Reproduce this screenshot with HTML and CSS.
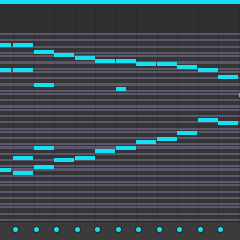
FILE: index.html
```html
<!DOCTYPE html>
<html lang="en">
<head>
    <meta charset="UTF-8">
    <meta name="viewport" content="width=device-width, initial-scale=1.0">
    <title>Piano Roll</title>
    <link rel="stylesheet" href="styles.css">
</head>
<body>
    <div class="roll">
        <div class="loop-bar"></div>
        <div class="ruler"></div>
        <div class="grid">
            <div class="note" style="left:0px;top:10px;width:11px"></div>
            <div class="note" style="left:13px;top:10px;width:20px"></div>
            <div class="note" style="left:0px;top:35px;width:11px"></div>
            <div class="note" style="left:13px;top:35px;width:20px"></div>
            <div class="note" style="left:33.5px;top:17px;width:20px"></div>
            <div class="note" style="left:54px;top:20px;width:20px"></div>
            <div class="note" style="left:74.5px;top:23px;width:20px"></div>
            <div class="note" style="left:95px;top:26px;width:20px"></div>
            <div class="note" style="left:115.5px;top:26px;width:20px"></div>
            <div class="note" style="left:136px;top:29px;width:20px"></div>
            <div class="note" style="left:156.5px;top:29px;width:20px"></div>
            <div class="note" style="left:177px;top:32px;width:20px"></div>
            <div class="note" style="left:197.5px;top:35px;width:20px"></div>
            <div class="note" style="left:218px;top:42px;width:20px"></div>
            <div class="note" style="left:33.5px;top:50px;width:20px"></div>
            <div class="note" style="left:115.5px;top:54px;width:10px"></div>
            <div class="note" style="left:238.5px;top:60px;width:1.5px"></div>
            <div class="note" style="left:197.5px;top:85px;width:20px"></div>
            <div class="note" style="left:218px;top:88px;width:20px"></div>
            <div class="note" style="left:177px;top:98px;width:20px"></div>
            <div class="note" style="left:156.5px;top:104px;width:20px"></div>
            <div class="note" style="left:136px;top:107px;width:20px"></div>
            <div class="note" style="left:115.5px;top:113px;width:20px"></div>
            <div class="note" style="left:95px;top:116px;width:20px"></div>
            <div class="note" style="left:33.5px;top:113px;width:20px"></div>
            <div class="note" style="left:13px;top:123px;width:20px"></div>
            <div class="note" style="left:74.5px;top:123px;width:20px"></div>
            <div class="note" style="left:54px;top:125px;width:20px"></div>
            <div class="note" style="left:33.5px;top:132px;width:20px"></div>
            <div class="note" style="left:0px;top:135px;width:11px"></div>
            <div class="note" style="left:13px;top:138px;width:20px"></div>
        </div>
        <div class="velocity">
            <span class="step"><i class="dot"></i></span>
            <span class="step"><i class="dot"></i></span>
            <span class="step"><i class="dot"></i></span>
            <span class="step"><i class="dot"></i></span>
            <span class="step"><i class="dot"></i></span>
            <span class="step"><i class="dot"></i></span>
            <span class="step"><i class="dot"></i></span>
            <span class="step"><i class="dot"></i></span>
            <span class="step"><i class="dot"></i></span>
            <span class="step"><i class="dot"></i></span>
            <span class="step"><i class="dot"></i></span>
        </div>
    </div>
</body>
</html>
```

FILE: styles.css
```css
body {
    margin: 0;
    width: 240px;
    height: 240px;
    overflow: hidden;
    background-color: #2e2e2e;
    font-family: "Liberation Sans", Arial, sans-serif;
}

.roll {
    display: flex;
    flex-direction: column;
    width: 240px;
    height: 240px;
    overflow: hidden;
}

.loop-bar {
    height: 4px;
    background-color: #17dff2;
}

.ruler {
    height: 29px;
    background-color: #2f2f2f;
    background-image: repeating-linear-gradient(to right, transparent 0, transparent 13px, rgba(0, 0, 0, 0.1) 13px, rgba(0, 0, 0, 0.1) 14px, transparent 14px, transparent 20.5px);
}

.grid {
    position: relative;
    height: 188px;
    overflow: hidden;
    background-color: #353437;
    background-image:
        repeating-linear-gradient(to right, transparent 0, transparent 13px, rgba(0, 0, 0, 0.12) 13px, rgba(0, 0, 0, 0.12) 14px, transparent 14px, transparent 20.5px),
        repeating-linear-gradient(to bottom,
            #5d576c 0, #5d576c 2.15px, #353437 2.15px, #353437 6.3px,
            #5d576c 6.3px, #5d576c 8.45px, #353437 8.45px, #353437 12.6px,
            #5d576c 12.6px, #5d576c 14.75px, #353437 14.75px, #353437 18.9px,
            #5d576c 18.9px, #5d576c 21.05px, #353437 21.05px, #353437 22.05px,
            #5d576c 22.05px, #5d576c 24.2px, #353437 24.2px, #353437 28.35px,
            #5d576c 28.35px, #5d576c 30.5px, #353437 30.5px, #353437 34.65px,
            #5d576c 34.65px, #5d576c 36.8px, #353437 36.8px, #353437 37.8px);
}

.note {
    position: absolute;
    height: 4px;
    background-color: #17dff2;
}

.velocity {
    display: flex;
    height: 18px;
    padding-left: 13.2px;
    border-top: 1px solid #262626;
    background-color: #3b3b3b;
}

.step {
    flex: 0 0 20.5px;
    padding-top: 5px;
}

.dot {
    display: block;
    width: 5px;
    height: 5px;
    border-radius: 50%;
    background-color: #17dff2;
    box-shadow: 0 0 0 1px rgba(0, 0, 0, 0.3);
}
```
